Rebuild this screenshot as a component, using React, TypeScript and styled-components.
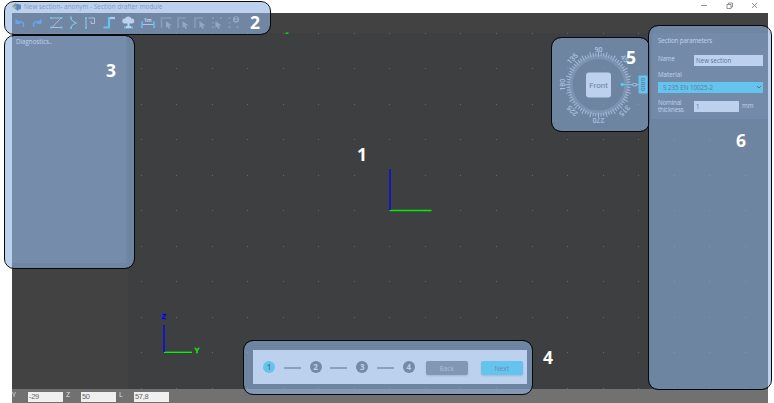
import React from "react";
import styled, { createGlobalStyle } from "styled-components";

const Global = createGlobalStyle`
  * { box-sizing: border-box; }
  body { margin: 0; background: #fff; overflow: hidden; font-family: "Open Sans", "Noto Sans", sans-serif; }
`;

const Stage = styled.div`
  position: relative;
  width: 774px;
  height: 403px;
  overflow: hidden;
  padding: 0 6px 0 12px;
`;
const Window = styled.div`
  display: grid;
  grid-template-rows: 13px 20px 356px 14px;
  height: 403px;
  background: #424242;
`;
const TitleBar = styled.header`
  display: flex;
  align-items: center;
  background: #fff;
  color: #707070;
`;
const TitleText = styled.span`
  margin-left: 2px;
  font: 6.4px/12px "Open Sans", sans-serif;
  white-space: nowrap;
`;
const WindowButtons = styled.svg`
  margin-left: auto;
  margin-right: 7px;
`;
const Toolbar = styled.div`
  display: flex;
  background: #424242;
`;
const Body = styled.main`
  display: grid;
  grid-template-columns: 116px 524px 116px;
  background: #3e3f41;
  position: relative;
`;
const LeftColumn = styled.aside`
  background: #424242;
`;
const Diagnostics = styled.div`
  width: 114px;
  height: 230px;
  padding: 4px;
  background: #505155;
  color: #fff;
  font-size: 6.2px;
  line-height: 9px;
`;
const Canvas = styled.svg`
  position: absolute;
  left: -12px;
  top: -33px;
`;
const LeftLayer = styled.div`
  position: absolute;
  left: 0;
  top: 0;
`;
const Parameters = styled.section`
  position: absolute;
  left: 640px;
  top: 0;
  width: 116px;
  height: 86px;
  padding: 4px 5px 0 6px;
  background: #4b4c50;
  color: #fff;
  font-size: 6.2px;
  line-height: 8px;
`;
const ParameterTitle = styled.div`
  height: 14px;
  font-size: 6.2px;
  line-height: 8px;
  letter-spacing: -0.12px;
`;
const Field = styled.label<{ $height: number }>`
  display: flex;
  align-items: center;
  height: ${(p) => p.$height}px;
`;
const FieldLabel = styled.span<{ $raised?: boolean }>`
  display: flex;
  flex-direction: column;
  width: 36px;
  flex: none;
  padding-bottom: ${(p) => (p.$raised ? 5 : 0)}px;
  line-height: 7px;
  letter-spacing: -0.15px;
`;
const Input = styled.span<{ $width: number }>`
  width: ${(p) => p.$width}px;
  height: 11px;
  padding-left: 2px;
  background: #fff;
  color: #000;
  line-height: 11px;
`;
const Unit = styled.span`
  padding-left: 3px;
`;
const MaterialLabel = styled.div`
  height: 12px;
  line-height: 9px;
`;
const MaterialSelect = styled.div`
  display: flex;
  justify-content: space-between;
  align-items: center;
  height: 11px;
  padding: 0 1px 0 5px;
  background: #28dfff;
  color: #001a20;
  font-size: 6.2px;
`;
const StatusBar = styled.footer`
  display: flex;
  background: #717171;
  color: #e4e4e4;
  font: 7px/12px "Open Sans", sans-serif;
`;
const StatusLabel = styled.span<{ $width: number }>`
  width: ${(p) => p.$width}px;
`;
const StatusInput = styled.span`
  width: 35px;
  height: 10px;
  margin-top: 3px;
  margin-right: 3px;
  padding-left: 1px;
  font: 7.5px/10px "Liberation Sans", sans-serif;
  letter-spacing: -0.3px;
  background: #f0f0f0;
  color: #666;
`;
const Wizard = styled.nav`
  position: absolute;
  left: 241px;
  top: 317px;
  width: 274px;
  height: 34px;
  display: flex;
  align-items: center;
  padding-left: 10px;
  background: #fff;
`;
const Step = styled.span<{ $active?: boolean }>`
  width: 12px;
  height: 12px;
  border-radius: 50%;
  background: ${(p) => (p.$active ? "#28dfff" : "#4c4c4c")};
  color: ${(p) => (p.$active ? "#222" : "#fff")};
  font: 700 8px/12px "Open Sans", sans-serif;
  text-align: center;
`;
const Connector = styled.i`
  width: 17px;
  height: 2px;
  margin: 1px 8.8px 0;
  background: #858585;
`;
const Action = styled.span<{ $primary?: boolean }>`
  width: 42px;
  height: 14px;
  margin-left: ${(p) => (p.$primary ? 13 : 11)}px;
  margin-top: 2px;
  border-radius: 2px;
  background: ${(p) => (p.$primary ? "#28dfff" : "#6c6c6c")};
  color: ${(p) => (p.$primary ? "#2c484e" : "#d0d0d0")};
  box-shadow: 0 1px 2px #bbb;
  font: 6.6px/15px "Open Sans", sans-serif;
  text-align: center;
`;
const Region = styled.div<{ $x: number; $y: number; $w: number; $h: number }>`
  position: absolute;
  left: ${(p) => p.$x}px;
  top: ${(p) => p.$y}px;
  width: ${(p) => p.$w}px;
  height: ${(p) => p.$h}px;
  border: 1px solid #05080c;
  border-radius: 10px;
  background: rgba(142, 179, 227, 0.605);
  background-clip: padding-box;
`;
const Marker = styled.b<{ $x: number; $y: number }>`
  position: absolute;
  left: ${(p) => p.$x}px;
  top: ${(p) => p.$y}px;
  color: #fff;
  font: 700 17.5px/20px "Open Sans", sans-serif;
`;
const Dial = styled.svg`
  position: absolute;
  left: 539px;
  top: 5px;
`;

const dotColumns = Array.from({ length: 18 }, (_, i) => 141 + i * 35.55);
const dotRows = Array.from({ length: 11 }, (_, i) => 33 + i * 35.5);

function Viewport() {
  return (
    <Canvas width="774" height="403" viewBox="0 0 774 403">
      {dotRows.map((y) =>
        dotColumns.map((x) => (
          <rect key={`${x}-${y}`} x={Math.round(x - 0.5)} y={Math.round(y - 0.5)} width="1" height="1" fill="#66676a" />
        ))
      )}
      <path d="M285.500 33.200h3" stroke="#00dc00" strokeWidth="1.5" />
      <path d="M390 210.500h41.500" stroke="#00ef00" strokeWidth="1.3" />
      <path d="M390 169v41" stroke="#1616c0" strokeWidth="2" />
      <path d="M164 352.300h28" stroke="#00ff00" strokeWidth="1.3" />
      <path d="M164 325v27" stroke="#1616c0" strokeWidth="2" />
      <g fontFamily="Liberation Sans, sans-serif" fontSize="7.500" fontWeight="700" strokeWidth=".35">
        <text x="161.500" y="319" fill="#0000ff" stroke="#0000ff">Z</text>
        <text x="194.500" y="352.500" fill="#00f000" stroke="#00f000">Y</text>
      </g>
    </Canvas>
  );
}

function ToolIcons() {
  return (
    <svg width="258" height="20" viewBox="12 13 258 20" fill="none">
      <g stroke="#3388ff" strokeWidth="1.600">
        <path d="M17.500 21.500h2.500q5 .5 3 5.500" />
        <path d="M39.500 21.500h-2.500q-5 .5-3 5.500" />
      </g>
      <path d="M15.500 18.500v5.500h5.500zM41.500 18.500v5.500h-5.500z" fill="#3388ff" />
      <g stroke="#d5d5d5">
        <path d="M52 18h9L52 27.500h9" />
        <path d="M71 18v1.500l4.500 3.500-4.500 3.500V28" />
        <path d="M86 27V18M88.500 18h6v5.500h-3.500V21" />
      </g>
      <path
        d="M50 17h2v2h-2zM60.500 17h2v2h-2zM50 26.500h2v2h-2zM60.500 26.500h2v2h-2zM70 16.500h2v2h-2zM74.500 22h2v2h-2zM70 27h2v2h-2zM85 17h2v2h-2zM85 27h2v2h-2z"
        fill="#28dfff"
      />
      <path d="M109 18h6" stroke="#d8f6ff" strokeWidth="2.200" />
      <path d="M103.500 27.500h5.500V17" stroke="#28dfff" strokeWidth="2.200" />
      <path d="M124.500 23.500a2.500 2.500 0 0 1 .5-5 3.500 3 0 0 1 6.500 0 2.500 2.500 0 0 1 .5 5zM127.500 22h2v4h-2z" fill="#fff" />
      <path d="M124 27.500h9" stroke="#28dfff" strokeWidth="2" />
      <path d="M126 27h5" stroke="#fff" strokeWidth="2" />
      <path d="M143 24.500h10" stroke="#e0e0e0" />
      <path d="M142 21.500v6.500M154 21.500v6.500" stroke="#28dfff" strokeWidth="1.500" />
      <text x="144" y="21.500" fill="#fff" fontSize="5" fontWeight="700" fontFamily="Open Sans">1m</text>
      <g stroke="#77787b" strokeWidth="1.700">
        <path d="M161.500 28V18h10M178 28V18h8M195 28V18h8" />
        <path d="M213 17v2M221 17v2M213 26v2M229.500 17v2M229.500 26v2M237.500 26v2M213 22v1.500M229.500 22v1.500" />
      </g>
      <g fill="#96979b">
        {[166, 182.5, 199.5, 215.5].map((x) => (
          <path key={x} transform={`translate(${x} 21)`} d="M0 0l6 4.500-3 .3 1.500 2.500-1.500.7-1.500-2.500L0 7z" />
        ))}
        <circle cx="236" cy="19.500" r="3.200" />
      </g>
      <text x="234.600" y="21.400" fill="#333" fontSize="5" fontWeight="700" fontFamily="Open Sans">2</text>
    </svg>
  );
}

function Compass() {
  return (
    <Dial width="98" height="94" viewBox="551 38 98 94" fontFamily="Roboto, sans-serif">
      <circle cx="598.500" cy="84.700" r="28" fill="none" stroke="#626468" strokeWidth="4.500" />
      {Array.from({ length: 72 }, (_, i) => (
        <path
          key={i}
          d={i % 3 === 0 ? "M626.500 84.700h5.500" : "M627 84.700h3.500"}
          stroke="#c2c4c8"
          strokeWidth="1"
          transform={`rotate(${i * 5} 598.5 84.7)`}
        />
      ))}
      {[0, 45, 90, 135, 180, 225, 270, 315].map((a) => (
        <text
          key={a}
          x="598.500"
          y={a % 90 === 0 ? 51.7 : 50.3}
          textAnchor="middle"
          fontSize="7"
          fill="#f4f5f6"
          transform={`rotate(${90 - a} 598.5 84.7)`}
        >
          {a}
        </text>
      ))}
      <rect x="586" y="72.500" width="25" height="25" rx="3" fill="#fff" />
      <text x="598.500" y="87.500" fontSize="8" textAnchor="middle" fill="#333">Front</text>
      <path d="M622 84.500h10.500M637 84.500h2" stroke="#28dfff" />
      <circle cx="622.300" cy="84.500" r="1.800" fill="#28dfff" />
      <rect x="638.500" y="75.500" width="9" height="18" rx="1" fill="#28dfff" />
      <text transform="translate(641 77.6) rotate(90)" fontSize="6" fontWeight="700" fill="#143840">GRID</text>
    </Dial>
  );
}

const regions = [
  [4, 1, 267, 34],
  [4, 35, 131, 234],
  [243, 340, 290, 55],
  [551, 37, 99, 95],
  [648, 25, 124, 365],
];
const markers = [
  [357, 144],
  [250, 12],
  [106, 60],
  [543, 347],
  [626, 47],
  [736, 130],
];

export default function App() {
  return (
    <>
      <Global />
      <Stage>
        <Window>
          <TitleBar>
            <svg width="10" height="10" viewBox="0 0 9 9">
              <path d="M0 4l3-3 5 4-3 3z" fill="#68724d" />
              <path d="M4 1.500l4 1v4L4 7z" fill="#174679" />
              <path d="M0 4h4l-2 2z" fill="#edc844" />
            </svg>
            <TitleText>New section- anonym - Section drafter module</TitleText>
            <WindowButtons width="61" height="13" viewBox="700 0 61 13" fill="none" stroke="#777" strokeWidth=".8">
              <path d="M701 5.500h6M727 4.500h4v4h-4zM728.500 4V3h4v4H731M752 3l5 5M757 3l-5 5" />
            </WindowButtons>
          </TitleBar>
          <Toolbar>
            <ToolIcons />
          </Toolbar>
          <Body>
            <LeftColumn />
            <Viewport />
            <LeftLayer>
              <Diagnostics>Diagnostics..</Diagnostics>
            </LeftLayer>
            <Compass />
            <Parameters>
              <ParameterTitle>Section parameters</ParameterTitle>
              <Field $height={19}>
                <FieldLabel $raised>Name</FieldLabel>
                <Input $width={69}>New section</Input>
              </Field>
              <MaterialLabel>Material</MaterialLabel>
              <MaterialSelect>
                S 235 EN 10025-2
                <svg width="6" height="5">
                  <path d="M1 1l2 2 2-2" stroke="#012" fill="none" />
                </svg>
              </MaterialSelect>
              <Field $height={26}>
                <FieldLabel>
                  <span>Nominal</span>
                  <span>thickness</span>
                </FieldLabel>
                <Input $width={45}>1</Input>
                <Unit>mm</Unit>
              </Field>
            </Parameters>
            <Wizard>
              <Step $active>1</Step>
              <Connector />
              <Step>2</Step>
              <Connector />
              <Step>3</Step>
              <Connector />
              <Step>4</Step>
              <Action>Back</Action>
              <Action $primary>Next</Action>
            </Wizard>
          </Body>
          <StatusBar>
            <StatusLabel $width={16}>Y</StatusLabel>
            <StatusInput>-29</StatusInput>
            <StatusLabel $width={15}>Z</StatusLabel>
            <StatusInput>50</StatusInput>
            <StatusLabel $width={15}>L</StatusLabel>
            <StatusInput>57,8</StatusInput>
          </StatusBar>
        </Window>
        {regions.map(([x, y, w, h]) => (
          <Region key={`${x}-${y}`} $x={x} $y={y} $w={w} $h={h} />
        ))}
        {markers.map(([x, y], i) => (
          <Marker key={i} $x={x} $y={y}>
            {i + 1}
          </Marker>
        ))}
      </Stage>
    </>
  );
}
